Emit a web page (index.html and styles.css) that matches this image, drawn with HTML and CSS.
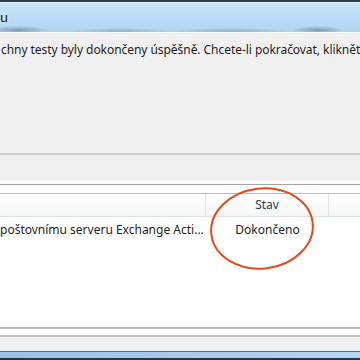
FILE: index.html
```html
<!DOCTYPE html>
<html lang="cs">
<head>
    <meta charset="UTF-8">
    <meta name="viewport" content="width=device-width, initial-scale=1.0">
    <title>Automatická konfigurace účtu</title>
    <link rel="stylesheet" href="styles.css">
</head>
<body>
    <div class="window">
        <div class="titlebar">
            <span class="title">u</span>
        </div>

        <div class="intro">
            <p class="message">chny testy byly dokončeny úspěšně. Chcete-li pokračovat, klikněte</p>
        </div>
        <div class="divider"></div>

        <div class="list-wrap">
            <div class="list">
                <div class="list-head">
                    <div class="col col-task"></div>
                    <div class="col col-state">Stav</div>
                    <div class="col col-rest"></div>
                </div>
                <div class="list-row">
                    <div class="cell cell-task">poštovnímu serveru Exchange Acti...</div>
                    <div class="cell cell-state">Dokončeno</div>
                    <div class="cell"></div>
                </div>
            </div>
            <div class="list-bottom"></div>
        </div>

        <div class="statusbar"></div>
        <div class="taskbar"></div>

        <!-- red marker drawn over the "Stav" column -->
        <svg class="marker" width="360" height="360" viewBox="0 0 360 360">
            <ellipse cx="262" cy="228.5" rx="51" ry="40" transform="rotate(-7 262 228.5)"
                     fill="none" stroke="#e24a1e" stroke-width="2"/>
        </svg>
    </div>
</body>
</html>
```

FILE: styles.css
```css
html, body {
    margin: 0;
    padding: 0;
}
body {
    font-family: "Noto Sans", "Open Sans", sans-serif;
    font-size: 12px;
    color: #1e1e1e;
    background-color: #f0f0f0;
}
.window {
    position: relative;
    width: 360px;
    height: 360px;
    overflow: hidden;
}
.titlebar {
    height: 30px;
    border-top: 2px solid #2f3d4c;
    border-bottom: 1px solid #f7fbff;
    background:
        radial-gradient(ellipse 30px 4px at 18px 28px, rgba(60, 80, 110, 0.45), rgba(60, 80, 110, 0)),
        radial-gradient(ellipse 50px 3px at 120px 29px, rgba(60, 80, 110, 0.25), rgba(60, 80, 110, 0)),
        radial-gradient(ellipse 60px 3px at 230px 29px, rgba(60, 80, 110, 0.25), rgba(60, 80, 110, 0)),
        radial-gradient(ellipse 26px 4px at 318px 28px, rgba(60, 80, 110, 0.45), rgba(60, 80, 110, 0)),
        linear-gradient(#c9e3f8, #b9d9f4 70%, #b2d2ee);
    box-shadow: inset 0 1px 0 #e4f1fc;
}
.title {
    display: block;
    padding: 7px 0 0 0;
    font-size: 13px;
    line-height: 16px;
    color: #101010;
    text-shadow: 0 0 6px rgba(255, 255, 255, 0.9);
}
.intro {
    height: 120px;
}
.message {
    margin: 0;
    padding: 9px 0 0 1px;
    line-height: 16px;
    letter-spacing: -0.05px;
    white-space: nowrap;
}
.divider {
    height: 0;
    border-top: 2px solid #cbcbcb;
}
.list-wrap {
    margin-top: 26px;
    padding-top: 3px;
    background-color: #fcfcfc;
}
.list {
    height: 134px;
    border-top: 1px solid #a5a5a5;
    border-bottom: 2px solid #b9b9c1;
    padding-top: 8px;
    background-color: #ffffff;
}
.list-head {
    display: grid;
    grid-template-columns: 206px 123px 1fr;
    height: 22px;
    border-top: 1px solid #bdbdbd;
    border-bottom: 1px solid #e2e2e2;
    background: linear-gradient(#ffffff, #f5f6f7);
}
.col {
    line-height: 22px;
    text-align: center;
    color: #2c3f58;
    border-right: 1px solid #e2e3e5;
}
.col-rest {
    border-right: none;
}
.list-row {
    display: grid;
    grid-template-columns: 206px 123px 1fr;
    height: 22px;
    margin-top: 2px;
}
.cell {
    line-height: 22px;
    white-space: nowrap;
    overflow: hidden;
}
.cell-state {
    text-align: center;
}
.list-bottom {
    height: 6px;
    border-bottom: 2px solid #c4c4cb;
    background-color: #ffffff;
}
.statusbar {
    height: 14px;
    border-bottom: 1px solid #5d6874;
}
.taskbar {
    height: 6px;
    border-bottom: 2px solid #2a3440;
    background: linear-gradient(90deg, #9dc2e4, #a9cced 60%, #b4d6f3);
}
.marker {
    position: absolute;
    left: 0;
    top: 0;
    pointer-events: none;
}
```
